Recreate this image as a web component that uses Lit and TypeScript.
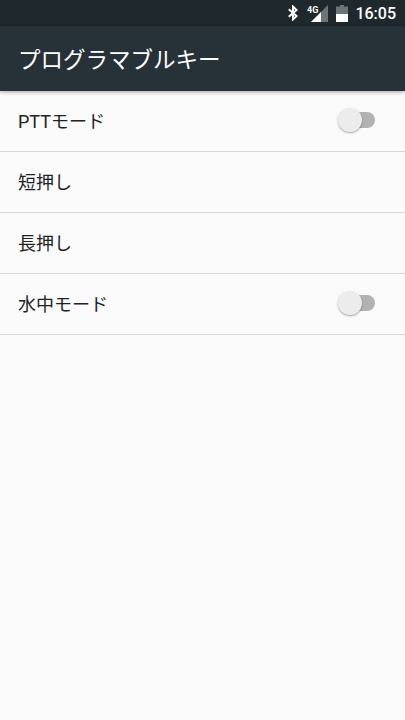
import { LitElement, html, css } from "lit";
import { customElement } from "lit/decorators.js";

const rows = [
  { label: "PTTモード", toggle: true },
  { label: "短押し", toggle: false },
  { label: "長押し", toggle: false },
  { label: "水中モード", toggle: true },
];

@customElement("app-root")
export class AppRoot extends LitElement {
  static styles = css`
    :host {
      display: block;
      width: 405px;
      height: 720px;
      background: #fafafa;
      overflow: hidden;
      font-family: Roboto, "Noto Sans CJK JP", sans-serif;
    }
    .status {
      height: 26px;
      background: #1f282d;
      display: flex;
      align-items: center;
      justify-content: flex-end;
      color: #fff;
      padding-right: 9px;
    }
    .status svg { display: block; flex: none; }
    .bt { margin-right: 9px; }
    .sig { margin-right: 8px; }
    .bat { margin-right: 7px; }
    .time { font-size: 16px; font-weight: 500; }
    .bar {
      height: 65px;
      background: #263238;
      display: flex;
      align-items: center;
      padding: 0 0 2px 18px;
      box-sizing: border-box;
      color: #fff;
      font-size: 22.5px;
      box-shadow: 0 1px 4px rgba(0, 0, 0, 0.35);
      position: relative;
    }
    .row {
      height: 60px;
      border-bottom: 1px solid #d6d6d6;
      display: flex;
      align-items: center;
      justify-content: space-between;
      padding: 0 30px 0 18px;
      font-size: 18px;
      color: #222;
    }
    .row span { margin-top: -3px; }
    .switch {
      position: relative;
      width: 36px;
      height: 16px;
      border-radius: 8px;
      background: #b2b2b2;
      margin-top: -2px;
    }
    .knob {
      position: absolute;
      left: -1px;
      top: -4px;
      width: 24px;
      height: 24px;
      border-radius: 50%;
      background: #ececec;
      box-shadow: 0 1px 2px rgba(0, 0, 0, 0.35);
    }
  `;

  render() {
    return html`
      <div class="status">
        <svg class="bt" width="10" height="16" viewBox="0 0 10 16" fill="none" stroke="#fff" stroke-width="2">
          <path d="M0.8 4.2 8.6 11 5 14.4V1.6L8.6 5 0.8 11.8" />
        </svg>
        <svg class="sig" width="21" height="17" viewBox="0 0 21 17">
          <path d="M21 0V17H4Z" fill="#fff" fill-opacity="0.35" />
          <path d="M14 7V17H4Z" fill="#fff" />
          <text x="0" y="7.5" font-size="9" font-weight="700" fill="#fff" font-family="Roboto">4G</text>
        </svg>
        <svg class="bat" width="12" height="17" viewBox="0 0 12 17">
          <path d="M4 0H8V1.5H12V17H0V1.5H4Z" fill="#fff" fill-opacity="0.35" />
          <path d="M0 9H12V17H0Z" fill="#fff" />
        </svg>
        <span class="time">16:05</span>
      </div>
      <div class="bar">プログラマブルキー</div>
      <div class="list">
        ${rows.map(
          (r) => html`<div class="row">
            <span>${r.label}</span>
            ${r.toggle ? html`<div class="switch"><div class="knob"></div></div>` : ""}
          </div>`
        )}
      </div>
    `;
  }
}
